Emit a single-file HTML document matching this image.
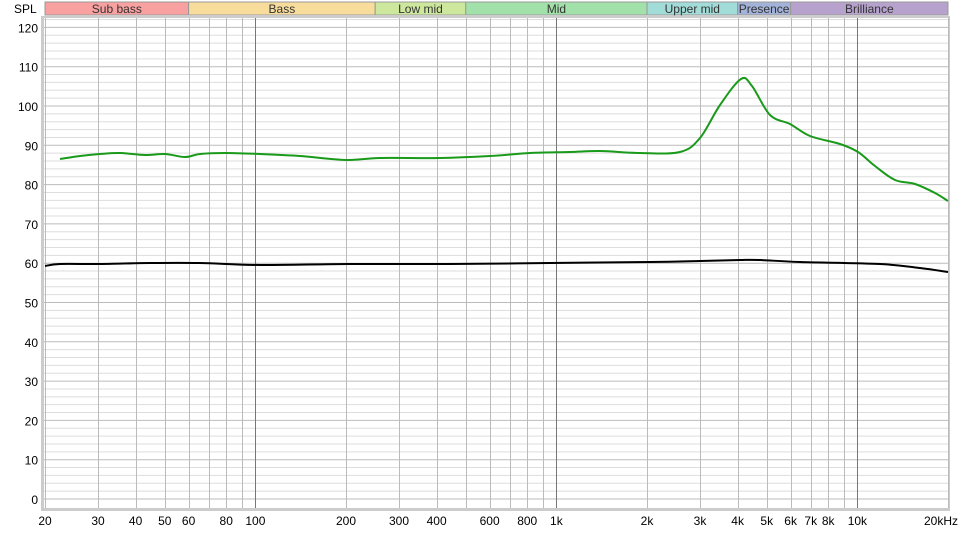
<!DOCTYPE html><html><head><style>body{margin:0;background:#fff;width:970px;height:532px;overflow:hidden;font-family:"Liberation Sans",sans-serif}</style></head><body>
<svg id="s" width="970" height="532" xmlns="http://www.w3.org/2000/svg" font-family="Liberation Sans, sans-serif" font-size="12" fill="#000"></svg>
<script>
const s=document.getElementById('s');let h='';
const X=f=>45+301*Math.log10(f/20), Y=d=>499-d*3.93;
// bands
const bands=[[20,60,'#f9a0a0','Sub bass'],[60,250,'#f7dc9c','Bass'],[250,500,'#cde79c'  ,'Low mid'],[500,2000,'#a2e2aa','Mid'],[2000,4000,'#a2dcd8','Upper mid'],[4000,6000,'#a2b2d8','Presence'],[6000,20000,'#b6a2cc','Brilliance']];
for(const b of bands){const a=X(b[0]),c=X(b[1]);h+=`<rect x="${a}" y="2" width="${c-a}" height="13" fill="${b[2]}" stroke="#999" stroke-width="1"/><text x="${(a+c)/2}" y="13" text-anchor="middle" fill="#333">${b[3]}</text>`;}
h+=`<text x="14" y="13">SPL</text>`;
// shadow frame
h+=`<rect x="41" y="16" width="909" height="495" fill="#ccc"/><rect x="44" y="18" width="904" height="490" fill="#fff"/>`;
for(let d=0;d<=122;d+=2){const y=Y(d);if(y<18)continue;h+=`<line x1="44" x2="948" y1="${y}" y2="${y}" stroke="${d%10==0?'#bbb':'#ddd'}"/>`;}
const fs=[];for(let dec of [10,100,1000,10000])for(let m=1;m<10;m++){const f=dec*m;if(f>=20&&f<=20000)fs.push(f);}
for(const f of fs){const x=Math.round(X(f))+.5;const maj=[100,1000,10000].includes(f);h+=`<line x1="${x}" x2="${x}" y1="18" y2="508" stroke="${maj?'#777':'#bbb'}"/>`;}
for(let d=0;d<=120;d+=10)h+=`<text x="38" y="${Y(d)+5}" text-anchor="end">${d}</text>`;
const lab=[[20,'20'],[30,'30'],[40,'40'],[50,'50'],[60,'60'],[80,'80'],[100,'100'],[200,'200'],[300,'300'],[400,'400'],[600,'600'],[800,'800'],[1000,'1k'],[2000,'2k'],[3000,'3k'],[4000,'4k'],[5000,'5k'],[6000,'6k'],[7000,'7k'],[8000,'8k'],[10000,'10k'],[20000,'20kHz']];
for(const l of lab){let x=X(l[0]);h+=`<text x="${l[0]==20000?x+10:x}" y="525" text-anchor="${l[0]==20000?'end':'middle'}">${l[1]}</text>`;}
function path(p){let d=`M${p[0][0]},${p[0][1]}`;for(let i=0;i<p.length-1;i++){const p0=p[i-1]||p[i],p1=p[i],p2=p[i+1],p3=p[i+2]||p2;d+=` C${p1[0]+(p2[0]-p0[0])/6},${p1[1]+(p2[1]-p0[1])/6} ${p2[0]-(p3[0]-p1[0])/6},${p2[1]-(p3[1]-p1[1])/6} ${p2[0]},${p2[1]}`;}return d;}
const g=[[60,159],[80,156],[100,154],[120,153],[145,155],[165,154],[185,157],[200,154],[225,153],[260,154],[300,156],[345,160],[380,158],[440,158],[490,156],[530,153],[570,152],[600,151],[640,153],[680,152],[700,138],[720,105],[741,79],[752,86],[770,115],[790,124],[810,136],[840,144],[858,152],[875,166],[895,180],[915,184],[935,193],[948,201]];
const k=[[45,266],[60,264],[100,264],[150,263],[200,263],[260,265],[350,264],[450,264],[550,263],[650,262],[700,261],[740,260],[760,260],[800,262],[880,264],[920,268],[948,272]];
h+=`<path d="${path(g)}" fill="none" stroke="#1a9a1a" stroke-width="2"/><path d="${path(k)}" fill="none" stroke="#000" stroke-width="2"/>`;
s.innerHTML=h;
</script></body></html>
